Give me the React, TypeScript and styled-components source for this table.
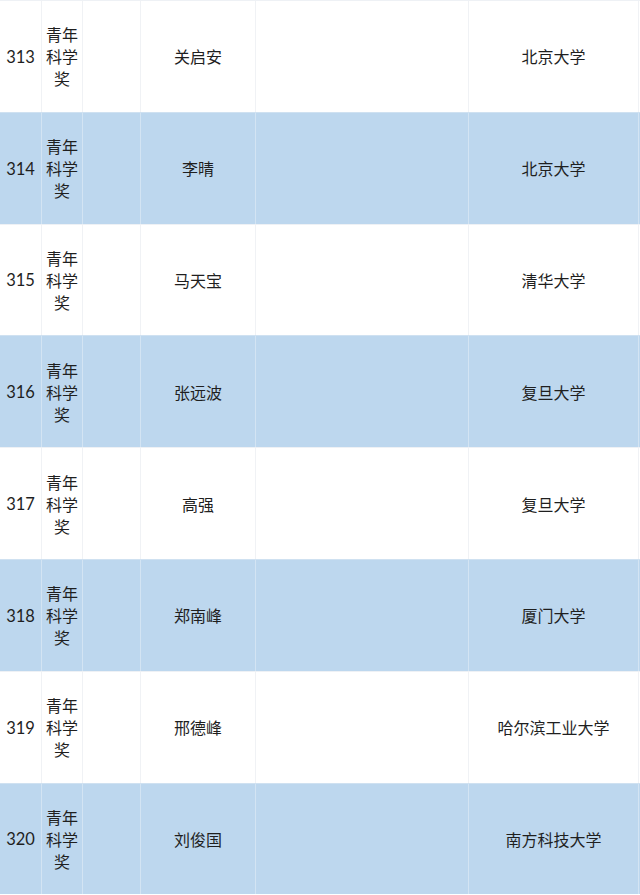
import styled, { createGlobalStyle } from "styled-components";

const GlobalStyle = createGlobalStyle`
  html, body {
    margin: 0;
    padding: 0;
    background: #ffffff;
  }
  body {
    font-family: "Noto Sans CJK SC", "Noto Sans", sans-serif;
    color: #1f1f1f;
  }
`;

const rows = [
  { no: 313, name: "关启安", org: "北京大学" },
  { no: 314, name: "李晴", org: "北京大学" },
  { no: 315, name: "马天宝", org: "清华大学" },
  { no: 316, name: "张远波", org: "复旦大学" },
  { no: 317, name: "高强", org: "复旦大学" },
  { no: 318, name: "郑南峰", org: "厦门大学" },
  { no: 319, name: "邢德峰", org: "哈尔滨工业大学" },
  { no: 320, name: "刘俊国", org: "南方科技大学" },
];

const App = () => {
  return (
    <>
      <GlobalStyle />
      <Table>
        {rows.map((r, i) => (
          <Row key={r.no} shaded={i % 2 === 1}>
            <NumCell>{r.no}</NumCell>
            <AwardCell>青年科学奖</AwardCell>
            <Cell />
            <Cell>{r.name}</Cell>
            <Cell />
            <Cell>{r.org}</Cell>
          </Row>
        ))}
      </Table>
    </>
  );
};

export default App;

const Table = styled.div`
  width: 640px;
  display: flex;
  flex-direction: column;
`;

const Row = styled.div<{ shaded: boolean }>`
  display: grid;
  grid-template-columns: 42px 41px 58px 115px 213px 170px 1px;
  height: 111.8px;
  background: ${(p) => (p.shaded ? "#bdd7ee" : "#ffffff")};
  border-top: 1px solid ${(p) => (p.shaded ? "#cfe1f1" : "#eef1f5")};
  box-sizing: border-box;

  & > div {
    border-right: 1px solid ${(p) => (p.shaded ? "#d3e4f3" : "#f0f2f5")};
  }
`;

const Cell = styled.div`
  display: flex;
  align-items: center;
  justify-content: center;
  font-size: 16px;
  line-height: 22px;
  text-align: center;
  box-sizing: border-box;
`;

const NumCell = styled(Cell)`
  font-family: "Lato", "Noto Sans", sans-serif;
  font-size: 16.5px;
  padding-top: 1px;
`;

const AwardCell = styled(Cell)`
  padding: 0 4px;
  word-break: break-all;
`;
